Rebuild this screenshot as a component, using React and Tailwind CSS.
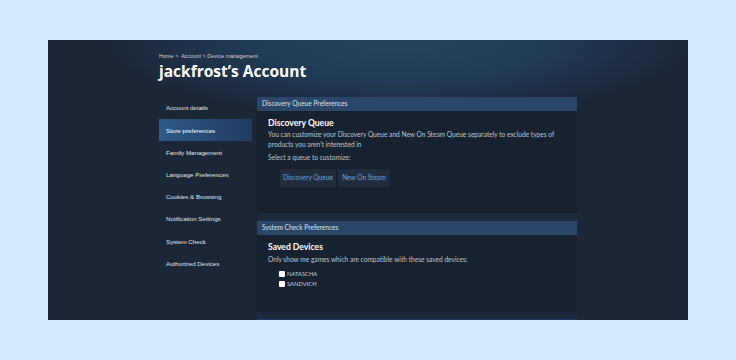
import React from "react";

const sidebar = [
  "Account details",
  "Store preferences",
  "Family Management",
  "Language Preferences",
  "Cookies & Browsing",
  "Notification Settings",
  "System Check",
  "Authorized Devices",
];

export default function App() {
  return (
    <div className="w-[736px] h-[360px] bg-[#d2ebfd] pt-[40px] px-[48px]">
      <div className="relative w-[640px] h-[280px] overflow-hidden bg-[#1b2637]">
        <div className="absolute left-0 top-0 w-[640px] h-[110px] bg-[radial-gradient(ellipse_300px_80px_at_55%_0%,#25435f_0%,#213b56_50%,rgba(27,38,55,0)_100%)]" />
        <div className="relative pl-[111px] pt-[12px]">
          <div
            className="h-[8px] leading-[8px] text-[5.5px] text-[#c9d3dc]"
            style={{ fontFamily: '"Liberation Sans", Arial, sans-serif' }}
          >
            Home &gt;&nbsp; Account &gt; Device management
          </div>
          <div
            className="mt-[1px] h-[20px] leading-[20px] text-[15.5px] font-bold text-white"
            style={{ fontFamily: '"Open Sans", sans-serif' }}
          >
            jackfrost’s Account
          </div>

          <div className="mt-[16px] flex gap-[5px]">
            <div
              className="w-[93px] flex flex-col"
              style={{ fontFamily: '"Liberation Sans", Arial, sans-serif' }}
            >
              {sidebar.map((s, i) => (
                <div
                  key={s}
                  className={
                    i === 1
                      ? "h-[22.2px] flex items-center pl-[7px] text-[6.2px] text-white bg-gradient-to-r from-[#2f5b89] to-[#1f3c5f]"
                      : "h-[22.2px] flex items-center pl-[7px] text-[6.2px] text-[#e2e6ea]"
                  }
                >
                  {s}
                </div>
              ))}
            </div>

            <div
              className="w-[320px] flex flex-col"
              style={{ fontFamily: 'Lato, "Open Sans", sans-serif' }}
            >
              <div className="h-[14px] flex items-center px-[5px] bg-[#2a4769] text-[6.6px] text-[#dbe4ec]">
                Discovery Queue Preferences
              </div>
              <div className="h-[102px] bg-[#172130] pl-[11px] pt-[6px]">
                <div className="h-[12px] leading-[12px] text-[8.6px] font-bold text-white">
                  Discovery Queue
                </div>
                <div className="mt-[1px] leading-[9.5px] text-[6.6px] text-[#bcc6cf] w-[300px]">
                  You can customize your Discovery Queue and New On Steam Queue separately to exclude types of products you aren’t interested in
                </div>
                <div className="mt-[4px] leading-[9.5px] text-[6.6px] text-[#bcc6cf]">
                  Select a queue to customize:
                </div>
                <div className="mt-[6px] ml-[12px] flex gap-[2px]">
                  <div className="w-[56px] h-[18px] flex items-center justify-center bg-[#212d3c] text-[6.6px] text-[#6aa6d9]">
                    Discovery Queue
                  </div>
                  <div className="w-[52px] h-[18px] flex items-center justify-center bg-[#212d3c] text-[6.6px] text-[#6aa6d9]">
                    New On Steam
                  </div>
                </div>
              </div>

              <div className="h-[8px] bg-[#1d2a3b]" />

              <div className="h-[14px] flex items-center px-[5px] bg-[#2a4769] text-[6.6px] text-[#dbe4ec]">
                System Check Preferences
              </div>
              <div className="h-[77px] bg-[#172130] pl-[11px] pt-[6px]">
                <div className="h-[12px] leading-[12px] text-[8.6px] font-bold text-white">
                  Saved Devices
                </div>
                <div className="mt-[2px] leading-[9.5px] text-[6.6px] text-[#bcc6cf]">
                  Only show me games which are compatible with these saved devices:
                </div>
                <div className="mt-[4.5px] ml-[11px] flex flex-col">
                  {["NATASCHA", "SANDVICH"].map((d) => (
                    <div key={d} className="h-[10px] flex items-center gap-[2px]">
                      <div className="w-[6px] h-[6px] bg-white rounded-[1px]" />
                      <span className="text-[5.8px] text-[#c9d3dc]">{d}</span>
                    </div>
                  ))}
                </div>
              </div>

              <div className="h-[7px] bg-[#1b2a3d]" />
              <div className="h-[14px] bg-[#243d5a]" />
            </div>
          </div>
        </div>
      </div>
    </div>
  );
}
